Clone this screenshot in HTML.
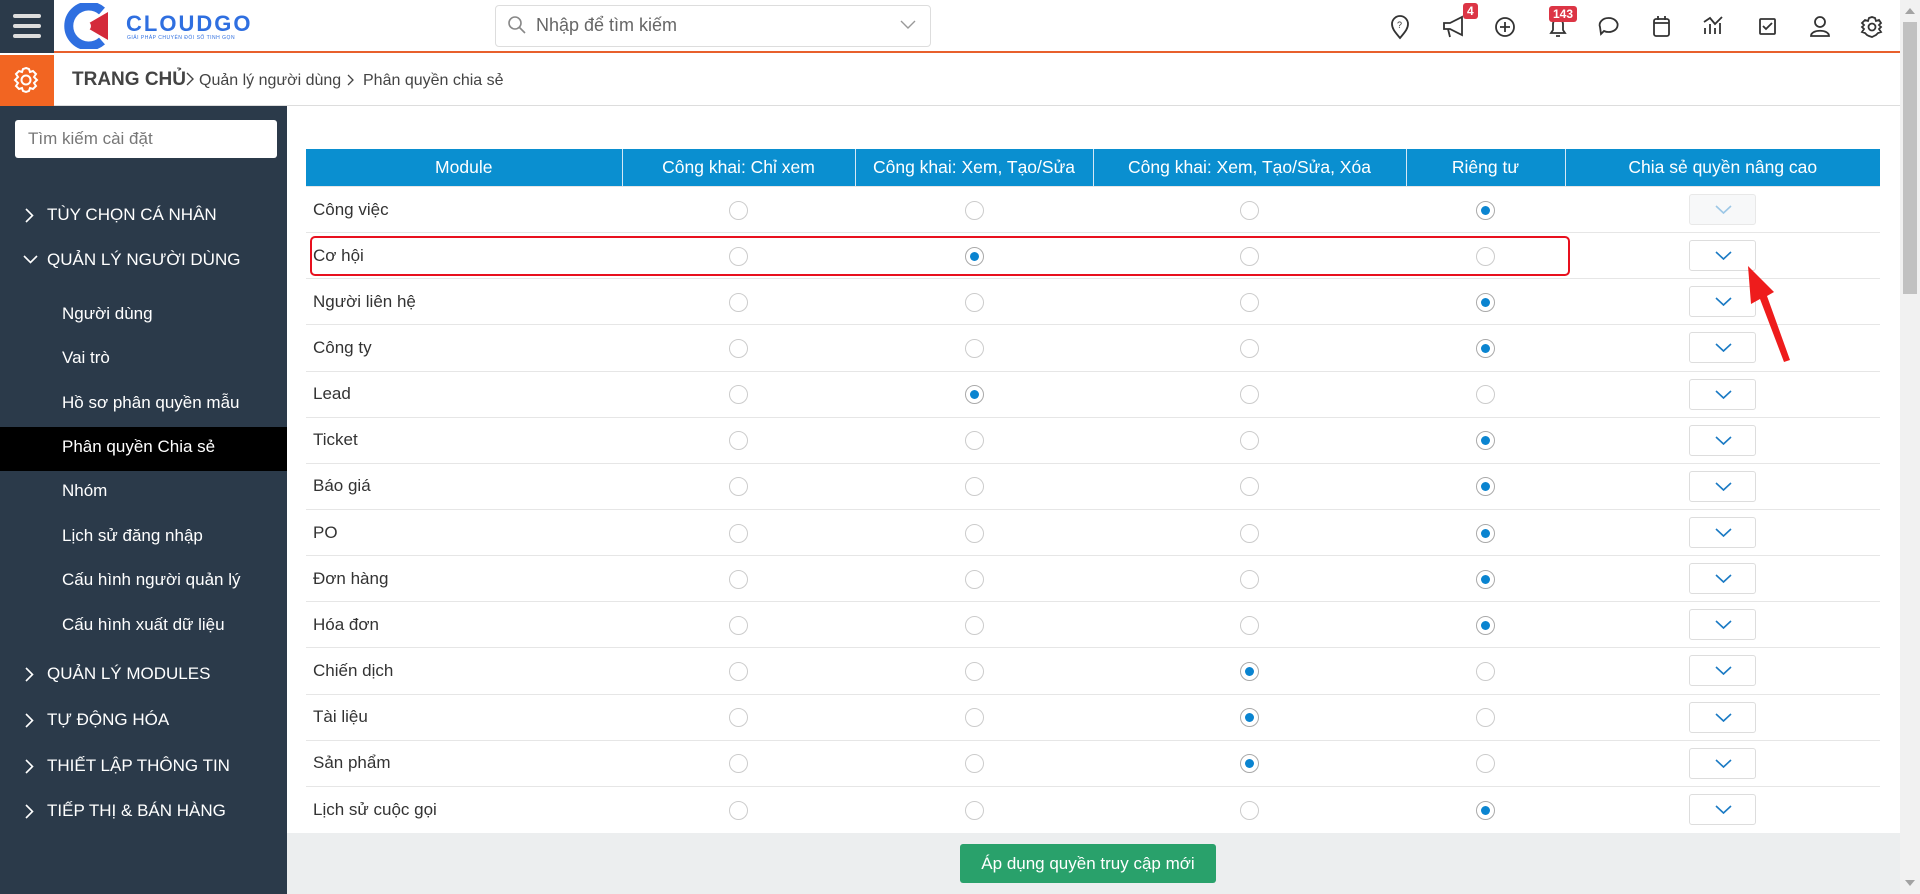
<!DOCTYPE html>
<html><head><meta charset="utf-8"><style>
*{box-sizing:border-box;margin:0;padding:0}
body{width:1920px;height:894px;overflow:hidden;background:#fff;font-family:"Liberation Sans","Noto Sans CJK SC",sans-serif;position:relative;color:#333}
.abs{position:absolute}
.top{left:0;top:0;width:1900px;height:53px;background:#fff;border-bottom:2px solid #e8602c}
.ham{left:0;top:0;width:54px;height:53px;background:#2b3a4a}
.ham i{position:absolute;left:13px;width:28px;height:4px;background:#ddd;border-radius:2px}
.crumb{left:0;top:55px;width:1900px;height:51px;border-bottom:1px solid #ddd;background:#fff}
.gear{left:0;top:55px;width:54px;height:51px;background:#f26522}
.side{left:0;top:106px;width:287px;height:788px;background:#2b3a4a}
.menu{position:absolute;color:#fff;font-size:17px}
.sub{left:62px}
.top1{left:47px}
.chev{position:absolute;left:25px}
.active{left:0;width:287px;background:#000;height:44px}
table{border-collapse:collapse;position:absolute;left:306px;top:149px;width:1574px;font-size:17px}
th{background:#0a8fd0;color:#fff;font-weight:normal;height:37px;border-left:1px solid #d4e8f5;font-size:17.5px}
td{height:46.15px;border-top:1px solid #e6e6e6;text-align:center}
td:first-child{text-align:left;padding-left:7px;color:#333}
.r{display:inline-block;width:19px;height:19px;border:1px solid #ccc;border-radius:50%;vertical-align:middle;position:relative}
.r.on{border-color:#aaa}
.r.on:after{content:"";position:absolute;left:4px;top:4px;width:9px;height:9px;border-radius:50%;background:#0a84d0}
.btn{display:inline-block;width:67px;height:31px;border:1px solid #ddd;border-radius:3px;vertical-align:middle;position:relative;background:#fff}
.btn.dis{background:#f7f8f9;border-color:#e8e8e8}
.btn svg{position:absolute;left:25px;top:10px}
.badge{position:absolute;background:#dc3545;color:#fff;font-size:12px;font-weight:bold;border-radius:3px;padding:1px 4px;line-height:14px}
</style></head><body>
<div class="abs top"></div>
<div class="abs ham"><i style="top:14px"></i><i style="top:24px"></i><i style="top:34px"></i></div>
<svg class="abs" style="left:62px;top:3px" width="56" height="46" viewBox="0 0 56 46"><path d="M40 8 A20 20 0 1 0 40 38" fill="none" stroke="#2f6fe0" stroke-width="9"/><path d="M22 23 L46 9 L46 37 Z" fill="#d42a3a"/><circle cx="24" cy="23" r="5" fill="#fff"/></svg>
<div class="abs" style="left:126px;top:11px;color:#2f6fe0;font-weight:bold;font-size:22px;letter-spacing:2px">CLOUDGO</div>
<div class="abs" style="left:127px;top:35px;color:#2f6fe0;font-size:5px;letter-spacing:.5px">GIẢI PHÁP CHUYỂN ĐỔI SỐ TINH GỌN</div>
<div class="abs" style="left:495px;top:5px;width:436px;height:42px;border:1px solid #ddd;border-radius:4px"></div>
<svg class="abs" style="left:507px;top:15px" width="20" height="20" viewBox="0 0 20 20"><circle cx="8" cy="8" r="6" fill="none" stroke="#888" stroke-width="1.6"/><path d="M12.5 12.5 L18 18" stroke="#888" stroke-width="1.6"/></svg>
<div class="abs" style="left:536px;top:15px;font-size:18px;color:#666">Nhập để tìm kiếm</div>
<svg class="abs" style="left:900px;top:20px" width="16" height="10" viewBox="0 0 16 10"><path d="M1 1 L8 8 L15 1" fill="none" stroke="#999" stroke-width="1.4"/></svg>
<svg class="abs" style="left:1388px;top:14px" width="510" height="26" viewBox="0 0 510 26" fill="none" stroke="#333" stroke-width="1.8">
<path d="M12 24 C6 17 4 14 4 10 A8 8 0 0 1 20 10 C20 14 18 17 12 24Z"/><text x="9" y="14" font-size="9" fill="#333" stroke="none">?</text>
<path d="M56 9 H62 L74 3 V21 L62 15 H56 Z M60 15 L62 23"/>
<circle cx="117" cy="13" r="9"/><path d="M117 8 V18 M112 13 H122"/>
<path d="M163 19 H177 L175 16 V10 A5 5 0 0 0 165 10 V16 Z M168 22 H172"/>
<path d="M213 20 L216 17 A9 7 0 1 0 212 13 Z"/>
<rect x="266" y="5" width="15" height="17" rx="2"/><path d="M266 9 H281 M270 2 V6 M277 2 V6" />
<path d="M317 20 V14 M322 20 V10 M327 20 V14 M332 20 V9 M316 8 L322 4 L327 10 L334 3"/>
<rect x="372" y="5" width="15" height="15" rx="1"/><path d="M375 12 L378 15 L384 9"/>
<circle cx="432" cy="8" r="5"/><path d="M423 22 C423 15 441 15 441 22 Z"/>
<circle cx="484" cy="13" r="3.5"/><path d="M484 3 L487 4 L488 7 L491 6 L493 9 L491 11 L493 13 L491 15 L493 18 L490 19 L488 21 L486 22 L484 23 L481 22 L479 21 L477 19 L474 18 L476 15 L474 13 L476 11 L474 9 L477 6 L480 7 L481 4 Z"/>
</svg>
<div class="badge" style="left:1463px;top:3px">4</div>
<div class="badge" style="left:1549px;top:6px">143</div>
<div class="abs" style="left:1900px;top:0;width:20px;height:894px;background:#f1f1f1"></div>
<div class="abs" style="left:1903px;top:22px;width:14px;height:272px;background:#c1c1c1"></div>
<div class="abs" style="left:1905px;top:8px;width:0;height:0;border:5px solid transparent;border-bottom:6px solid #a3a3a3;border-top:0"></div>
<div class="abs" style="left:1905px;top:880px;width:0;height:0;border:5px solid transparent;border-top:6px solid #a3a3a3;border-bottom:0"></div>
<div class="abs crumb"></div>
<div class="abs gear"></div>
<svg class="abs" style="left:11px;top:65px" width="30" height="30" viewBox="0 0 30 30" fill="none" stroke="#fff" stroke-width="2"><circle cx="15" cy="15" r="4.5"/><path d="M15 3 L18 4 L19 7 L22 6 L25 9 L23 12 L26 15 L23 18 L25 21 L22 24 L19 23 L18 26 L15 27 L12 26 L11 23 L8 24 L5 21 L7 18 L4 15 L7 12 L5 9 L8 6 L11 7 L12 4 Z"/></svg>
<div class="abs" style="left:72px;top:69px;font-size:19px;color:#444;font-weight:bold">TRANG CHỦ</div>
<svg class="abs" style="left:186px;top:72px" width="8" height="14" viewBox="0 0 8 14"><path d="M1 1 L7 7 L1 13" fill="none" stroke="#444" stroke-width="1.4"/></svg>
<div class="abs" style="left:199px;top:72px;font-size:16px;color:#444">Quản lý người dùng</div>
<svg class="abs" style="left:347px;top:74px" width="7" height="12" viewBox="0 0 7 12"><path d="M1 1 L6 6 L1 11" fill="none" stroke="#444" stroke-width="1.3"/></svg>
<div class="abs" style="left:363px;top:72px;font-size:16px;color:#444">Phân quyền chia sẻ</div>
<div class="abs side"></div>
<div class="abs" style="left:15px;top:120px;width:262px;height:38px;background:#fff;border-radius:3px;font-size:17px;color:#777;padding:9px 13px">Tìm kiếm cài đặt</div>
<div class="abs active" style="top:427px"></div>
<svg class="chev" style="top:208px" width="9" height="15" viewBox="0 0 9 15"><path d="M1 1 L7.5 7.5 L1 14" fill="none" stroke="#fff" stroke-width="1.6"/></svg>
<svg class="chev" style="top:255px;left:23px" width="15" height="9" viewBox="0 0 15 9"><path d="M1 1 L7.5 7.5 L14 1" fill="none" stroke="#fff" stroke-width="1.6"/></svg>
<svg class="chev" style="top:667px" width="9" height="15" viewBox="0 0 9 15"><path d="M1 1 L7.5 7.5 L1 14" fill="none" stroke="#fff" stroke-width="1.6"/></svg>
<svg class="chev" style="top:713px" width="9" height="15" viewBox="0 0 9 15"><path d="M1 1 L7.5 7.5 L1 14" fill="none" stroke="#fff" stroke-width="1.6"/></svg>
<svg class="chev" style="top:759px" width="9" height="15" viewBox="0 0 9 15"><path d="M1 1 L7.5 7.5 L1 14" fill="none" stroke="#fff" stroke-width="1.6"/></svg>
<svg class="chev" style="top:804px" width="9" height="15" viewBox="0 0 9 15"><path d="M1 1 L7.5 7.5 L1 14" fill="none" stroke="#fff" stroke-width="1.6"/></svg>
<div class="menu top1" style="top:205px">TÙY CHỌN CÁ NHÂN</div>
<div class="menu top1" style="top:250px">QUẢN LÝ NGƯỜI DÙNG</div>
<div class="menu sub" style="top:304px">Người dùng</div>
<div class="menu sub" style="top:348px">Vai trò</div>
<div class="menu sub" style="top:393px">Hồ sơ phân quyền mẫu</div>
<div class="menu sub" style="top:437px">Phân quyền Chia sẻ</div>
<div class="menu sub" style="top:481px">Nhóm</div>
<div class="menu sub" style="top:526px">Lịch sử đăng nhập</div>
<div class="menu sub" style="top:570px">Cấu hình người quản lý</div>
<div class="menu sub" style="top:615px">Cấu hình xuất dữ liệu</div>
<div class="menu top1" style="top:664px">QUẢN LÝ MODULES</div>
<div class="menu top1" style="top:710px">TỰ ĐỘNG HÓA</div>
<div class="menu top1" style="top:756px">THIẾT LẬP THÔNG TIN</div>
<div class="menu top1" style="top:801px">TIẾP THỊ &amp; BÁN HÀNG</div>
<table>
<colgroup><col style="width:316px"><col style="width:233px"><col style="width:238px"><col style="width:313px"><col style="width:159px"><col style="width:315px"></colgroup>
<tr><th style="border-left:0">Module</th><th>Công khai: Chỉ xem</th><th>Công khai: Xem, Tạo/Sửa</th><th>Công khai: Xem, Tạo/Sửa, Xóa</th><th>Riêng tư</th><th>Chia sẻ quyền nâng cao</th></tr>
</table>
<div id="rows"></div>
<div class="abs" style="left:310px;top:236px;width:1260px;height:40px;border:2px solid #e8101e;border-radius:5px"></div>
<svg class="abs" style="left:1740px;top:262px" width="60" height="104" viewBox="0 0 60 104"><path d="M8 4 L34 30 L27 34 L50 98 L44 100 L20 37 L11 42 Z" fill="#ee1c1c"/></svg>
<div class="abs" style="left:287px;top:833px;width:1613px;height:61px;background:#eceeef"></div>
<div class="abs" style="left:960px;top:844px;width:256px;height:39px;background:#29a16b;border-radius:3px;color:#fff;font-size:17px;text-align:center;line-height:39px">Áp dụng quyền truy cập mới</div>
<script>
var d=[["Công việc",3],["Cơ hội",1],["Người liên hệ",3],["Công ty",3],["Lead",1],["Ticket",3],["Báo giá",3],["PO",3],["Đơn hàng",3],["Hóa đơn",3],["Chiến dịch",2],["Tài liệu",2],["Sản phẩm",2],["Lịch sử cuộc gọi",3]];
var h='<table style="top:186px"><colgroup><col style="width:316px"><col style="width:233px"><col style="width:238px"><col style="width:313px"><col style="width:159px"><col style="width:315px"></colgroup>';
d.forEach(function(r,i){h+='<tr><td>'+r[0]+'</td>';for(var c=0;c<4;c++)h+='<td><span class="r'+(c==r[1]?' on':'')+'"></span></td>';
h+='<td><span class="btn'+(i==0?' dis':'')+'"><svg width="17" height="10" viewBox="0 0 17 10"><path d="M1 1 L8.5 8 L16 1" fill="none" stroke="'+(i==0?'#9cc7e6':'#1a7ac4')+'" stroke-width="1.6"/></svg></span></td></tr>';});
document.getElementById('rows').innerHTML=h+'</table>';
</script>
</body></html>
